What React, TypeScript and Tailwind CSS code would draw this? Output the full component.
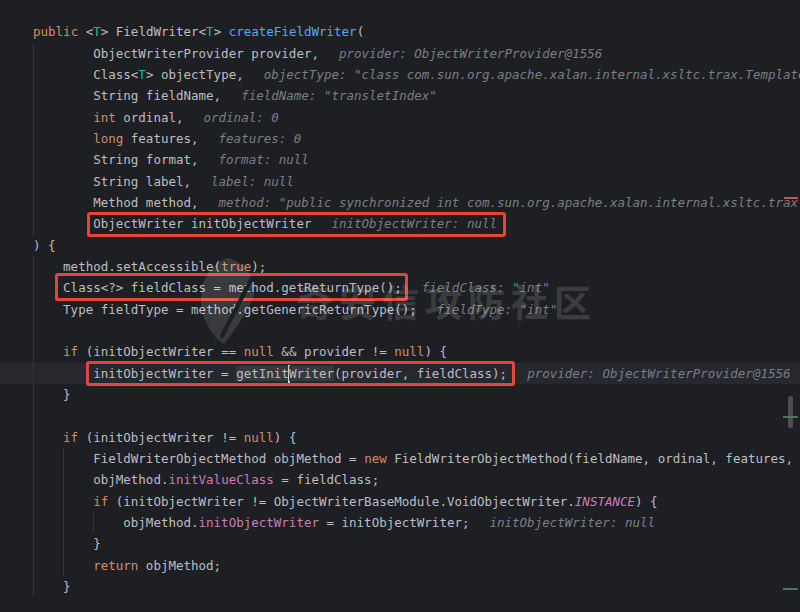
import React from 'react';

type Tok = [string, string?];

// syntax colours (IntelliJ dark)
const C: Record<string, string> = {
  d: 'text-[#bcbec4]',
  k: 'text-[#cf8e6d]',
  f: 'text-[#56a8f5]',
  t: 'text-[#16baac]',
  p: 'text-[#c77dba]',
  s: 'text-[#c77dba] italic',
};

type Line = {
  indent: number;
  toks: Tok[];
  hint?: string;
  guides?: number[];
  current?: boolean;
};

const params = (toks: Tok[], hint: string): Line => ({ indent: 8, toks, hint, guides: [0] });

const lines: Line[] = [
  { indent: 0, toks: [['public', 'k'], [' <'], ['T', 't'], ['> FieldWriter<'], ['T', 't'], ['> '], ['createFieldWriter', 'f'], ['(']] },
  params([['ObjectWriterProvider provider,']], 'provider: ObjectWriterProvider@1556'),
  params([['Class<'], ['T', 't'], ['> objectType,']], 'objectType: "class com.sun.org.apache.xalan.internal.xsltc.trax.TemplatesImpl"'),
  params([['String fieldName,']], 'fieldName: "transletIndex"'),
  params([['int', 'k'], [' ordinal,']], 'ordinal: 0'),
  params([['long', 'k'], [' features,']], 'features: 0'),
  params([['String format,']], 'format: null'),
  params([['String label,']], 'label: null'),
  params([['Method method,']], 'method: "public synchronized int com.sun.org.apache.xalan.internal.xsltc.trax.TemplatesImpl.getTransletIndex()"'),
  params([['ObjectWriter initObjectWriter']], 'initObjectWriter: null'),
  { indent: 0, toks: [[') {']] },
  { indent: 4, toks: [['method.setAccessible('], ['true', 'k'], [');']], guides: [0] },
  { indent: 4, toks: [['Class<?> fieldClass = method.getReturnType();']], hint: 'fieldClass: "int"', guides: [0] },
  { indent: 4, toks: [['Type fieldType = method.getGenericReturnType();']], hint: 'fieldType: "int"', guides: [0] },
  { indent: 0, toks: [], guides: [0] },
  { indent: 4, toks: [['if', 'k'], [' (initObjectWriter == '], ['null', 'k'], [' && provider != '], ['null', 'k'], [') {']], guides: [0] },
  { indent: 8, toks: [], hint: 'provider: ObjectWriterProvider@1556', guides: [0], current: true },
  { indent: 4, toks: [['}']], guides: [0] },
  { indent: 0, toks: [], guides: [0] },
  { indent: 4, toks: [['if', 'k'], [' (initObjectWriter != '], ['null', 'k'], [') {']], guides: [0] },
  { indent: 8, toks: [['FieldWriterObjectMethod objMethod = '], ['new', 'k'], [' FieldWriterObjectMethod(fieldName, ordinal, features, format, label, method);']], guides: [0, 4] },
  { indent: 8, toks: [['objMethod.'], ['initValueClass', 'p'], [' = fieldClass;']], guides: [0, 4] },
  { indent: 8, toks: [['if', 'k'], [' (initObjectWriter != ObjectWriterBaseModule.VoidObjectWriter.'], ['INSTANCE', 's'], [') {']], guides: [0, 4] },
  { indent: 12, toks: [['objMethod.'], ['initObjectWriter', 'p'], [' = initObjectWriter;']], hint: 'initObjectWriter: null', guides: [0, 4, 8] },
  { indent: 8, toks: [['}']], guides: [0, 4] },
  { indent: 8, toks: [['return', 'k'], [' objMethod;']], guides: [0, 4] },
  { indent: 4, toks: [['}']], guides: [0] },
];

const CurrentCode = () => (
  <>
    <span className="text-[#bcbec4]">initObjectWriter = </span>
    <span className="bg-[#373a3d] text-[#bcbec4]">getInit</span>
    <span className="inline-block w-[2px] h-[18px] -mx-[1px] bg-[#ced0d6] align-middle" />
    <span className="bg-[#373a3d] text-[#bcbec4]">Writer</span>
    <span className="text-[#bcbec4]">(provider, fieldClass);</span>
  </>
);

const CodeLine = ({ line }: { line: Line }) => {
  const levels = Math.max(line.indent / 4, (line.guides?.length ?? 0));
  const indents = Array.from({ length: levels }, (_, i) => i);
  return (
    <div className={`flex h-[21.33px] leading-[21.33px] whitespace-pre pl-[33px] ${line.current ? 'bg-[#26282e]' : ''}`}>
      {indents.map((i) => (
        <span
          key={i}
          className={`inline-block w-[4ch] shrink-0 ${line.guides?.includes(i * 4) ? 'shadow-[inset_1px_0_0_#313438]' : ''}`}
        />
      ))}
      <span className="shrink-0">
        {line.current ? (
          <CurrentCode />
        ) : (
          line.toks.map(([text, kind], i) => (
            <span key={i} className={C[kind ?? 'd']}>
              {text}
            </span>
          ))
        )}
      </span>
      {line.hint && <span className="ml-[20px] shrink-0 italic text-[#7a7e85]">{line.hint}</span>}
    </div>
  );
};

const Watermark = () => (
  <div className="absolute left-[198px] top-[256px] flex items-center gap-[40px] pointer-events-none">
    <svg width="58" height="90" viewBox="0 0 58 90">
      <path
        d="M30 2 C12 8 2 26 3 46 C4 66 16 82 26 88 C34 78 46 62 56 40 C58 22 48 8 30 2 Z"
        fill="rgba(255,255,255,0.12)"
      />
      <path d="M24 80 L54 22" stroke="#1e1f22" strokeWidth="4" strokeLinecap="round" />
    </svg>
    <span className="text-[37px] font-bold tracking-[6px] leading-none text-white/[0.13] font-['Noto_Sans_CJK_SC',sans-serif]">
      奇安信攻防社区
    </span>
  </div>
);

export default function App() {
  return (
    <div className="relative w-[800px] h-[612px] overflow-hidden bg-[#1e1f22] font-['DejaVu_Sans_Mono',monospace] text-[12.5px]">
      <div className="pt-[21.33px]">
        {lines.map((line, i) => (
          <CodeLine key={i} line={line} />
        ))}
      </div>

      {/* annotation boxes */}
      <div className="absolute left-[87px] top-[212px] w-[419px] h-[25px] border-[3px] border-[#e5443c] rounded-[3px]" />
      <div className="absolute left-[55px] top-[273px] w-[353px] h-[28px] border-[3px] border-[#e5443c] rounded-[3px]" />
      <div className="absolute left-[86px] top-[361px] w-[429px] h-[25px] border-[3px] border-[#e5443c] rounded-[3px]" />

      {/* right gutter marks and scrollbar */}
      <div className="absolute left-[784px] top-[197px] w-[14px] h-[2px] bg-[#c9524b]" />
      <div className="absolute left-[788px] top-[396px] w-[5px] h-[32px] rounded-full bg-[#4c4e52]" />
      <div className="absolute left-[783px] top-[416px] w-[15px] h-[2px] bg-[#55705c]" />
      <div className="absolute left-[783px] top-[588px] w-[15px] h-[2px] bg-[#55705c]" />

      <Watermark />
    </div>
  );
}
